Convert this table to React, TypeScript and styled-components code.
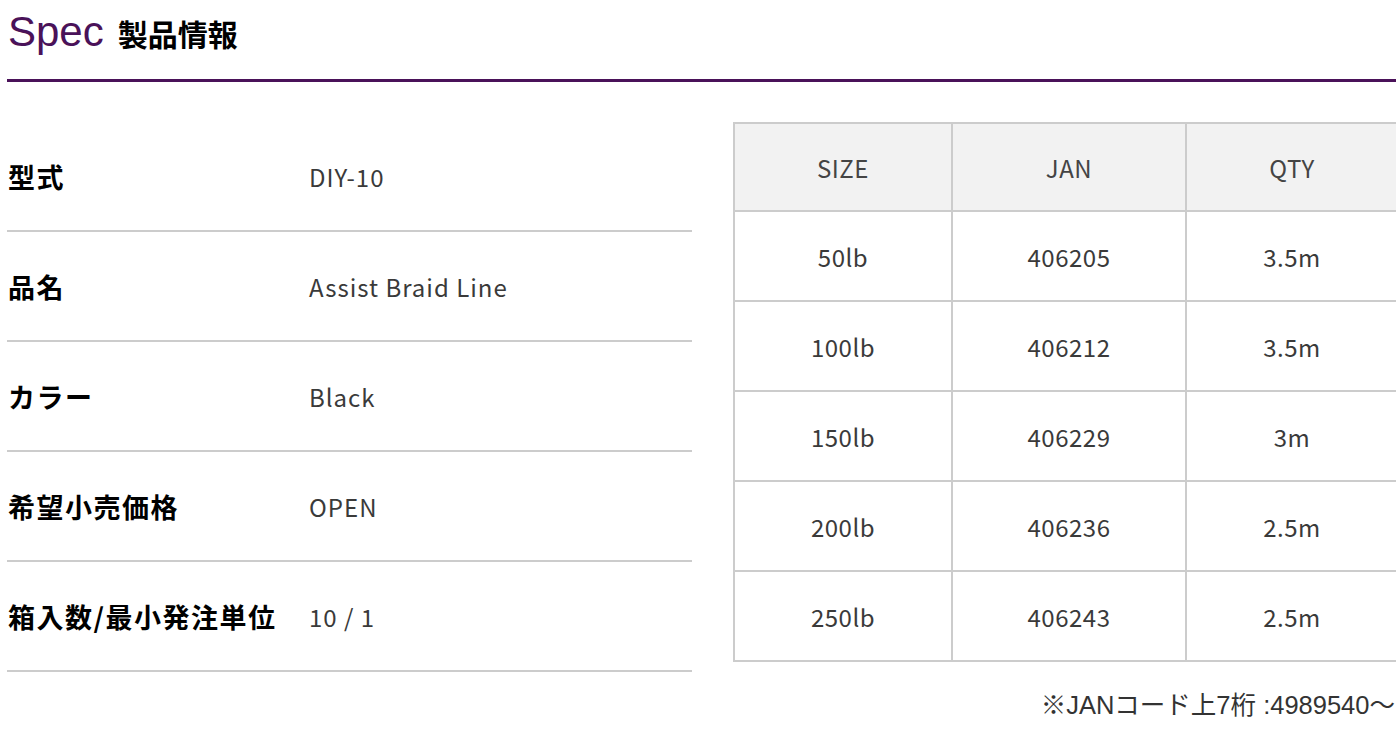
import React from 'react';
import styled, { createGlobalStyle } from 'styled-components';

const GlobalStyle = createGlobalStyle`
  html, body {
    margin: 0;
    padding: 0;
    background: #fff;
    overflow: hidden;
  }
  body {
    font-family: "Noto Sans CJK JP", "Noto Sans", sans-serif;
    color: #333;
  }
`;

const specs = [
  { label: '型式', value: 'DIY-10' },
  { label: '品名', value: 'Assist Braid Line' },
  { label: 'カラー', value: 'Black' },
  { label: '希望小売価格', value: 'OPEN' },
  { label: '箱入数/最小発注単位', value: '10 / 1' },
];

const sizes = [
  { size: '50lb', jan: '406205', qty: '3.5m' },
  { size: '100lb', jan: '406212', qty: '3.5m' },
  { size: '150lb', jan: '406229', qty: '3m' },
  { size: '200lb', jan: '406236', qty: '2.5m' },
  { size: '250lb', jan: '406243', qty: '2.5m' },
];

const App: React.FC = () => {
  return (
    <Page>
      <GlobalStyle />
      <Heading>
        <HeadingEn>Spec</HeadingEn>
        <HeadingJa>製品情報</HeadingJa>
      </Heading>
      <Body>
        <SpecList>
          {specs.map((s) => (
            <SpecRow key={s.label}>
              <SpecLabel>{s.label}</SpecLabel>
              <SpecValue>{s.value}</SpecValue>
            </SpecRow>
          ))}
        </SpecList>
        <TableColumn>
          <SizeTable>
            <colgroup>
              <col style={{ width: 218 }} />
              <col style={{ width: 234 }} />
              <col />
            </colgroup>
            <thead>
              <tr>
                <HeadCell>SIZE</HeadCell>
                <HeadCell>JAN</HeadCell>
                <HeadCell>QTY</HeadCell>
              </tr>
            </thead>
            <tbody>
              {sizes.map((r) => (
                <tr key={r.size}>
                  <Cell>{r.size}</Cell>
                  <Cell>{r.jan}</Cell>
                  <Cell>{r.qty}</Cell>
                </tr>
              ))}
            </tbody>
          </SizeTable>
          <Note>※JANコード上7桁 :4989540～</Note>
        </TableColumn>
      </Body>
    </Page>
  );
};

const Page = styled.div`
  width: 1392px;
  margin-left: 7px;
`;

const Heading = styled.h2`
  display: flex;
  align-items: baseline;
  gap: 14px;
  margin: 0;
  padding: 8px 0 22px 1px;
  line-height: 48px;
  border-bottom: 3px solid #4a1259;
`;

const HeadingEn = styled.span`
  font-family: "Liberation Sans", Arial, sans-serif;
  font-size: 42px;
  line-height: 48px;
  font-weight: 400;
  color: #4a1259;
`;

const HeadingJa = styled.span`
  font-family: "Noto Sans CJK JP", sans-serif;
  font-size: 30px;
  line-height: 48px;
  font-weight: 700;
  color: #000;
`;

const Body = styled.div`
  display: flex;
  align-items: flex-start;
  gap: 41px;
  margin-top: 40px;
`;

const SpecList = styled.div`
  width: 685px;
  flex-shrink: 0;
`;

const SpecRow = styled.div`
  display: flex;
  align-items: center;
  height: 108px;
  border-bottom: 2px solid #cccccc;
`;

const SpecLabel = styled.div`
  width: 301px;
  padding-left: 1px;
  font-size: 27px;
  font-weight: 700;
  letter-spacing: 1.5px;
  color: #000;
  white-space: nowrap;
`;

const SpecValue = styled.div`
  font-size: 24px;
  letter-spacing: 1px;
  color: #3a3a3a;
`;

const TableColumn = styled.div`
  flex: 1;
`;

const SizeTable = styled.table`
  width: 100%;
  border-collapse: collapse;
  table-layout: fixed;
  border: 2px solid #cccccc;
  border-right: none;
`;

const HeadCell = styled.th`
  height: 86px;
  padding: 0;
  background: #f2f2f2;
  border: 2px solid #cccccc;
  font-size: 24px;
  font-weight: 400;
  letter-spacing: 0.5px;
  color: #444;
  text-align: center;
`;

const Cell = styled.td`
  height: 88px;
  padding: 0;
  border: 2px solid #cccccc;
  font-size: 24px;
  letter-spacing: 0.5px;
  color: #3a3a3a;
  text-align: center;
`;

const Note = styled.p`
  margin: 22px 0 0;
  padding-right: 4px;
  text-align: right;
  font-family: "Liberation Sans", "Noto Sans CJK JP", sans-serif;
  font-size: 25.5px;
  color: #333;
`;

export default App;
